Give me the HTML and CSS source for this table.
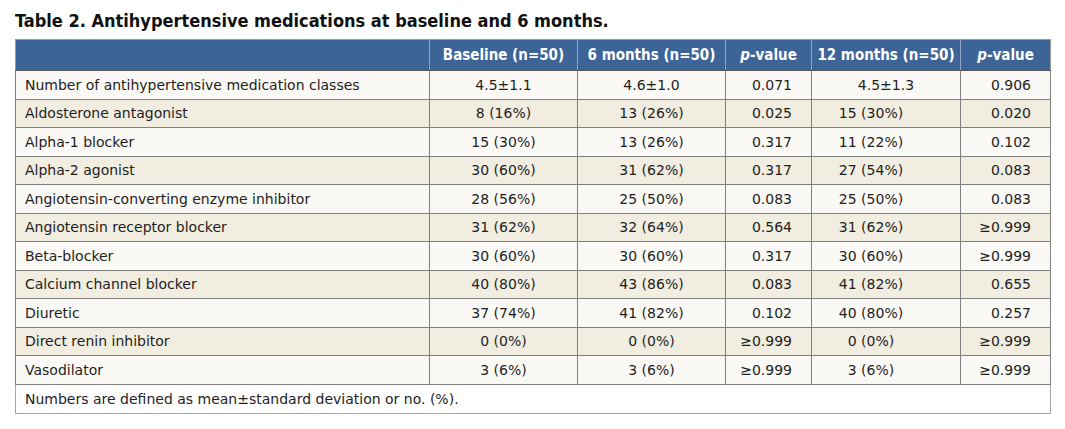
FILE: index.html
```html
<!DOCTYPE html>
<html>
<head>
<meta charset="utf-8">
<link rel="stylesheet" href="styles.css">
</head>
<body>
<div class="page">
  <h1 class="title">Table 2. Antihypertensive medications at baseline and 6 months.</h1>
  <table class="tbl">
    <colgroup>
      <col class="c-name">
      <col class="c-base">
      <col class="c-six">
      <col class="c-p1">
      <col class="c-twelve">
      <col class="c-p2">
    </colgroup>
    <thead>
      <tr>
        <th></th>
        <th>Baseline (n=50)</th>
        <th>6 months (n=50)</th>
        <th><i>p</i>-value</th>
        <th>12 months (n=50)</th>
        <th><i>p</i>-value</th>
      </tr>
    </thead>
    <tbody>
      <tr class="odd"><td>Number of antihypertensive medication classes</td><td>4.5±1.1</td><td>4.6±1.0</td><td class="p">0.071</td><td class="mean">4.5±1.3</td><td class="p">0.906</td></tr>
      <tr class="even"><td>Aldosterone antagonist</td><td>8 (16%)</td><td>13 (26%)</td><td class="p">0.025</td><td class="tw">15 (30%)</td><td class="p">0.020</td></tr>
      <tr class="odd"><td>Alpha-1 blocker</td><td>15 (30%)</td><td>13 (26%)</td><td class="p">0.317</td><td class="tw">11 (22%)</td><td class="p">0.102</td></tr>
      <tr class="even"><td>Alpha-2 agonist</td><td>30 (60%)</td><td>31 (62%)</td><td class="p">0.317</td><td class="tw">27 (54%)</td><td class="p">0.083</td></tr>
      <tr class="odd"><td>Angiotensin-converting enzyme inhibitor</td><td>28 (56%)</td><td>25 (50%)</td><td class="p">0.083</td><td class="tw">25 (50%)</td><td class="p">0.083</td></tr>
      <tr class="even"><td>Angiotensin receptor blocker</td><td>31 (62%)</td><td>32 (64%)</td><td class="p">0.564</td><td class="tw">31 (62%)</td><td class="p">≥0.999</td></tr>
      <tr class="odd"><td>Beta-blocker</td><td>30 (60%)</td><td>30 (60%)</td><td class="p">0.317</td><td class="tw">30 (60%)</td><td class="p">≥0.999</td></tr>
      <tr class="even"><td>Calcium channel blocker</td><td>40 (80%)</td><td>43 (86%)</td><td class="p">0.083</td><td class="tw">41 (82%)</td><td class="p">0.655</td></tr>
      <tr class="odd"><td>Diuretic</td><td>37 (74%)</td><td>41 (82%)</td><td class="p">0.102</td><td class="tw">40 (80%)</td><td class="p">0.257</td></tr>
      <tr class="even"><td>Direct renin inhibitor</td><td>0 (0%)</td><td>0 (0%)</td><td class="p">≥0.999</td><td class="tw">0 (0%)</td><td class="p">≥0.999</td></tr>
      <tr class="odd"><td>Vasodilator</td><td>3 (6%)</td><td>3 (6%)</td><td class="p">≥0.999</td><td class="tw">3 (6%)</td><td class="p">≥0.999</td></tr>
    </tbody>
    <tfoot>
      <tr><td colspan="6">Numbers are defined as mean±standard deviation or no. (%).</td></tr>
    </tfoot>
  </table>
</div>
</body>
</html>
```
FILE: styles.css
```css
html, body {
  margin: 0;
  padding: 0;
  background: #ffffff;
}
.page {
  padding: 11px 15px 0 15px;
}
.title {
  margin: 0 0 8px 0;
  font-family: "DejaVu Sans", sans-serif;
  font-stretch: condensed;
  font-weight: bold;
  font-size: 18px;
  line-height: 20px;
  color: #111;
}
.tbl {
  border-collapse: collapse;
  table-layout: fixed;
  width: 1035px;
  font-family: "DejaVu Sans", sans-serif;
  font-size: 14px;
  color: #1e1e1e;
  border: 1px solid #9a9a9a;
}
.c-name { width: 414px; }
.c-base { width: 148px; }
.c-six { width: 148px; }
.c-p1 { width: 86px; }
.c-twelve { width: 149px; }
.c-p2 { width: 90px; }
.tbl th {
  background: #3d6496;
  color: #fff;
  font-family: "DejaVu Sans", sans-serif;
  font-stretch: condensed;
  font-weight: bold;
  font-size: 15px;
  height: 30px;
  padding: 0;
  text-align: center;
  border-left: 1px solid #8ea5c3;
  border-bottom: 1px solid #555;
}
.tbl th:first-child { border-left: none; }
.tbl td {
  height: 28.5px;
  padding: 0;
  text-align: center;
  border: 1px solid #808080;
  box-sizing: border-box;
}
.tbl td:first-child {
  text-align: left;
  padding-left: 9px;
}
.tbl td.p {
  text-align: right;
  padding-right: 19px;
}
.tbl td.tw {
  padding-right: 30px;
}
.odd td { background: #faf9f5; }
.even td { background: #f1ede0; }
.tbl tfoot td {
  background: #fff;
  height: 29px;
  border: 1px solid #a8a8a8;
}
```
